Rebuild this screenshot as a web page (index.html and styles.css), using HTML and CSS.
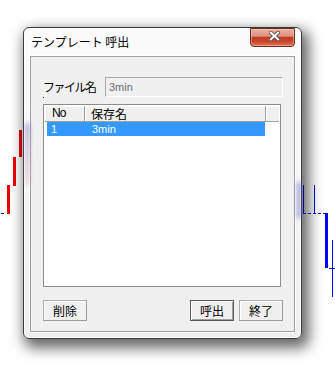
FILE: index.html
```html
<!DOCTYPE html>
<html lang="ja">
<head>
<meta charset="utf-8">
<title>テンプレート 呼出</title>
<link rel="stylesheet" href="styles.css">
</head>
<body>
<div class="chart">
  <span class="red r1"></span>
  <span class="red r2"></span>
  <span class="red r3"></span>
  <span class="dash dash-l"></span>
  <span class="dash dash-r"></span>
  <span class="blue bl1"></span>
  <span class="blue bl2"></span>
  <span class="blue bthick"></span>
  <span class="blue bthin"></span>
  <span class="tick"></span>
</div>
<div class="window">
  <div class="titlebar">
    <span class="title">テンプレート 呼出</span>
    <button class="close" type="button" aria-label="閉じる">
      <svg width="11" height="10" viewBox="0 0 11 10">
        <path d="M1.8 1.6 L9.2 8.4 M9.2 1.6 L1.8 8.4" stroke="#4d4d4d" stroke-width="3.8" stroke-linecap="square" fill="none"/>
        <path d="M1.8 1.6 L9.2 8.4 M9.2 1.6 L1.8 8.4" stroke="#ffffff" stroke-width="2" stroke-linecap="square" fill="none"/>
      </svg>
    </button>
  </div>
  <div class="panel">
    <div class="field-row">
      <span class="label">ファイル名</span>
      <div class="input">3min</div>
    </div>
    <div class="listbox">
      <div class="header">
        <div class="hcell c1">No</div>
        <div class="hcell c2">保存名</div>
        <div class="hcell c3"></div>
      </div>
      <div class="row selected">
        <div class="cell c1">1</div>
        <div class="cell c2">3min</div>
      </div>
    </div>
    <div class="buttons">
      <button class="btn" type="button">削除</button>
      <span class="spacer"></span>
      <button class="btn default" type="button">呼出</button>
      <button class="btn" type="button">終了</button>
    </div>
  </div>
  <span class="glow glow-r"></span>
  <span class="glow glow-l"></span>
</div>
</body>
</html>
```
FILE: styles.css
```css
html, body {
  margin: 0;
  width: 335px;
  height: 368px;
  background: #ffffff;
  overflow: hidden;
}
body {
  position: relative;
  font-family: "Noto Sans CJK JP", "Liberation Sans", sans-serif;
}

/* background chart (free canvas) */
.chart span {
  position: absolute;
  display: block;
}
.red { background: #ee0000; width: 3px; }
.blue { background: #0000ff; }
.r1 { left: 19px; top: 130px; height: 27px; }
.r2 { left: 13px; top: 157px; height: 29px; }
.r3 { left: 7px; top: 185px; height: 29px; }
.dash { top: 213px; border-top: 1px dashed #0000ff; }
.dash-l { left: 1px; width: 3px; border-top-style: solid; }
.dash-r { left: 303px; width: 23px; }
.bl1 { left: 303px; top: 185px; width: 1px; height: 28px; }
.bl2 { left: 314px; top: 185px; width: 1px; height: 28px; }
.bthick { left: 325px; top: 213px; width: 3px; height: 55px; }
.bthin { left: 332px; top: 240px; width: 1px; height: 57px; }
.tick { left: 329px; top: 268px; width: 6px; border-top: 1px solid #0000ff; }

/* window */
.window {
  position: absolute;
  left: 23px;
  top: 27px;
  width: 279px;
  height: 312px;
  box-sizing: border-box;
  border: 1px solid #3c3c3c;
  border-radius: 6px;
  background: linear-gradient(#fbfbfb, #efefef);
  box-shadow: inset 0 0 0 1px #ffffff, 4px 6px 14px 3px rgba(0, 0, 0, 0.6);
  display: flex;
  flex-direction: column;
}
.titlebar {
  flex: none;
  height: 28px;
  display: flex;
  align-items: flex-start;
  justify-content: space-between;
  padding: 0 6px 0 7px;
}
.title {
  font-size: 12px;
  line-height: 28px;
  color: #000;
  white-space: nowrap;
}
.close {
  width: 45px;
  height: 19px;
  box-sizing: border-box;
  margin: 0;
  padding: 0 0 3px 4px;
  border: 1px solid #6b2b20;
  border-radius: 0 0 4px 4px;
  background: linear-gradient(#eab0a3 0%, #df9182 42%, #c63a22 50%, #c84329 72%, #dd7558 100%);
  box-shadow: inset 0 0 0 1px rgba(255, 220, 210, 0.45);
  display: flex;
  align-items: center;
  justify-content: center;
}
.close svg { display: block; }

.panel {
  flex: 1;
  margin: 0 6px 6px;
  border: 1px solid #a0a0a0;
  box-shadow: 0 0 0 1px #ffffff;
  background: #f0f0f0;
  padding: 20px 11px 10px 12px;
  display: flex;
  flex-direction: column;
}
.field-row {
  display: flex;
  align-items: center;
  height: 20px;
}
.label {
  position: relative;
  width: 62px;
  font-size: 12px;
  line-height: 20px;
  letter-spacing: -1.5px;
  color: #000;
  white-space: nowrap;
}
.label::after {
  content: "";
  position: absolute;
  left: 0;
  top: 20px;
  width: 1px;
  height: 1px;
  background: #333;
}
.input {
  width: 178px;
  height: 20px;
  box-sizing: border-box;
  border: 1px solid;
  border-color: #a8a8a8 #ffffff #ffffff #a8a8a8;
  background: #f0f0f0;
  color: #6d6d6d;
  font: 11px/18px "Liberation Sans", sans-serif;
  padding-left: 3px;
}

.listbox {
  width: 238px;
  height: 183px;
  margin-top: 7px;
  box-sizing: border-box;
  border: 1px solid #8e8e8e;
  padding: 1px;
  background: #ffffff;
}
.header {
  display: flex;
  height: 16px;
  box-sizing: border-box;
  border-bottom: 1px solid #a0a0a0;
  background: #f0f0f0;
}
.hcell {
  box-sizing: border-box;
  height: 15px;
  border-right: 1px solid #a0a0a0;
  box-shadow: inset 1px 1px #ffffff;
  font-size: 12px;
  line-height: 15px;
  color: #000;
  white-space: nowrap;
}
.hcell.c1 {
  width: 40px;
  padding-left: 7px;
  font-family: "Liberation Sans", sans-serif;
  letter-spacing: -1px;
}
.hcell.c2 { width: 181px; padding-left: 6px; }
.hcell.c3 { flex: 1; border-right: none; }

.row {
  display: flex;
  height: 14px;
  width: 218px;
  margin-left: 2px;
  font: 11px/14px "Liberation Sans", sans-serif;
}
.row.selected {
  background: #3399ff;
  color: #ffffff;
}
.cell.c1 { width: 38px; box-sizing: border-box; padding-left: 4px; }
.cell.c2 { padding-left: 7px; }

.buttons {
  display: flex;
  gap: 5px;
  margin-top: 13px;
  height: 21px;
}
.spacer { flex: 1; }
.btn {
  width: 44px;
  height: 21px;
  box-sizing: border-box;
  margin: 0;
  padding: 0;
  border: 1px solid #acacac;
  border-bottom-color: #9a9a9a;
  border-right-color: #9a9a9a;
  background: #f0f0f0;
  box-shadow: inset 1px 1px #ffffff;
  font-family: "Noto Sans CJK JP", sans-serif;
  font-size: 12px;
  line-height: 19px;
  color: #000;
}
.btn.default {
  border-color: #5a5a5a;
  box-shadow: inset 1px 1px #ffffff, inset -1px -1px #a0a0a0;
}

/* blurred chart colours seen through the glass frame */
.glow {
  position: absolute;
  display: block;
  filter: blur(2px);
}
.glow-r {
  left: 273px;
  top: 154px;
  width: 4px;
  height: 36px;
  background: rgba(110, 110, 215, 0.6);
}
.glow-l {
  left: 1px;
  top: 95px;
  width: 5px;
  height: 62px;
  background: linear-gradient(rgba(120, 110, 200, 0.5), rgba(225, 150, 165, 0.3));
}
```
